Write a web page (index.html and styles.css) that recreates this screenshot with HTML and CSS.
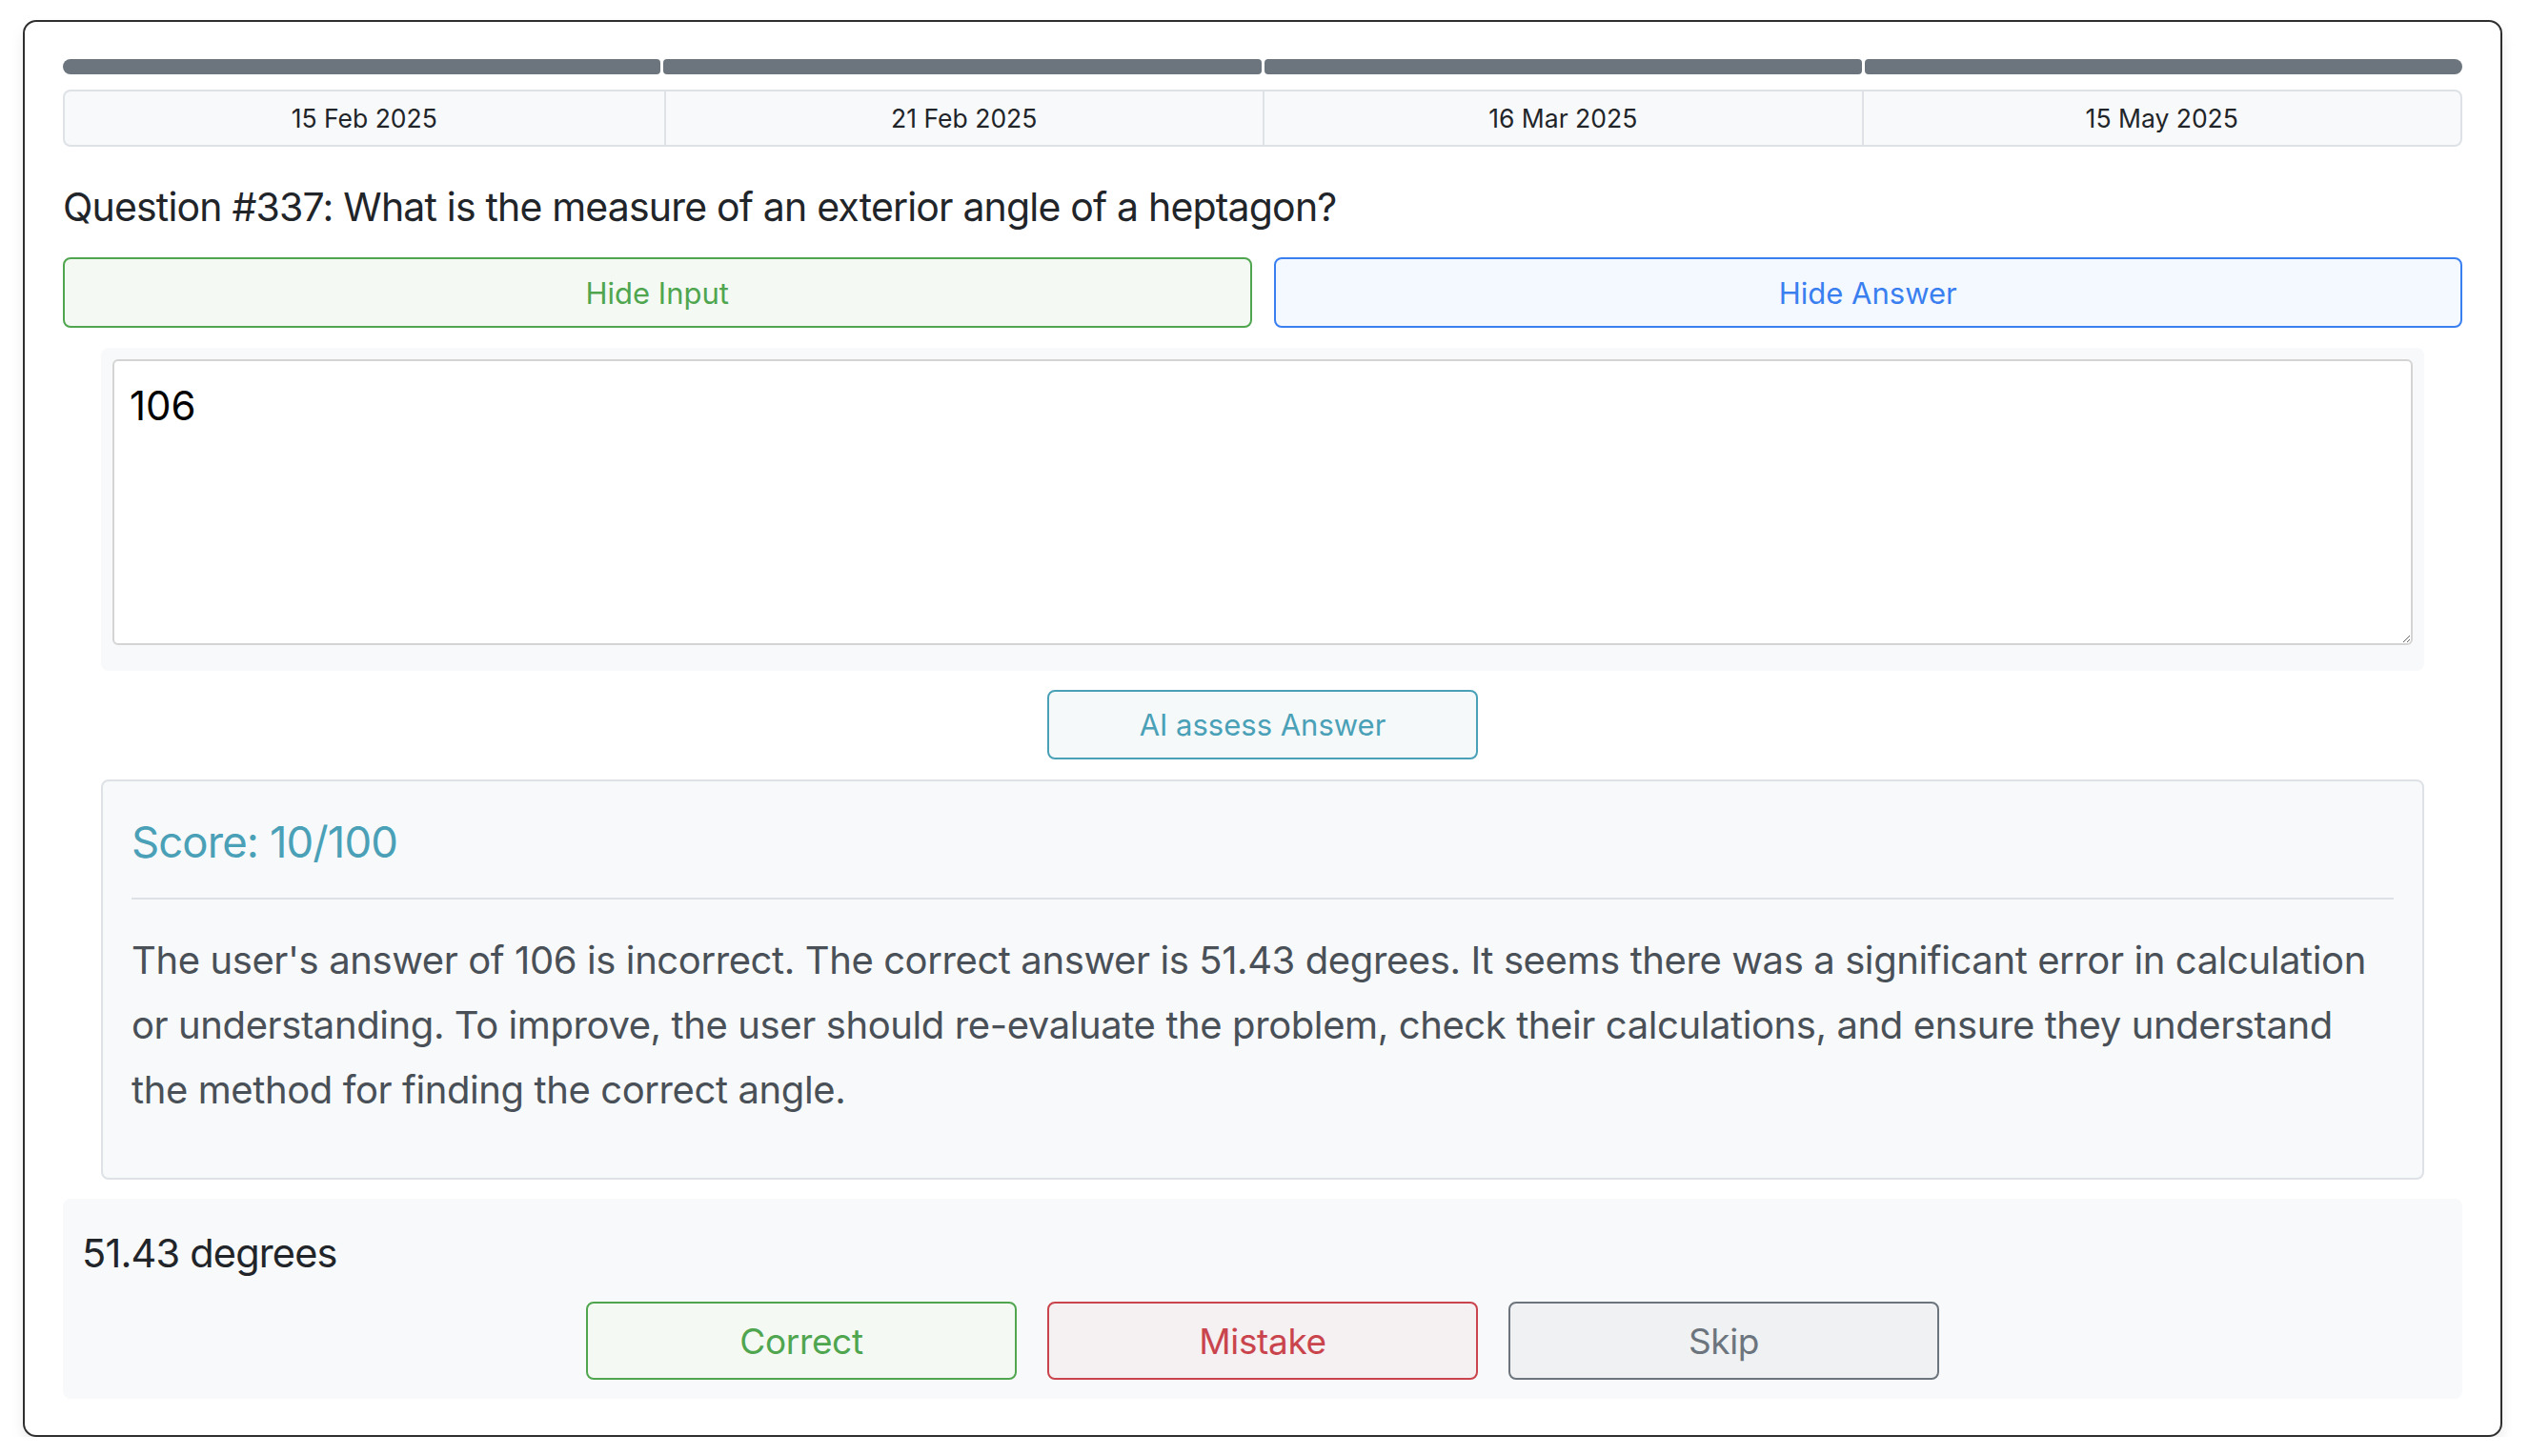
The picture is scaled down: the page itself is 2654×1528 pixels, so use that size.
FILE: index.html
```html
<!DOCTYPE html>
<html lang="en">
  <head>
    <meta charset="UTF-8" />
    <meta name="viewport" content="width=device-width, initial-scale=1.0" />
    <title>Review Question</title>
    <link rel="stylesheet" href="styles.css">
  </head>
  <body>
    <div class="review-card">
      <div class="timeline">
        <div class="segment"></div>
        <div class="segment"></div>
        <div class="segment"></div>
        <div class="segment"></div>
      </div>
      <div class="dates">
        <div class="date">15 Feb 2025</div>
        <div class="date">21 Feb 2025</div>
        <div class="date">16 Mar 2025</div>
        <div class="date">15 May 2025</div>
      </div>

      <h5 class="question">Question #337: What is the measure of an exterior angle of a heptagon?</h5>

      <div class="toggles">
        <button class="btn btn-green">Hide Input</button>
        <button class="btn btn-blue">Hide Answer</button>
      </div>

      <div class="input-panel">
        <textarea class="answer-input">106</textarea>
      </div>

      <div class="assess-row">
        <button class="btn btn-teal assess-btn">AI assess Answer</button>
      </div>

      <div class="score-card">
        <h4 class="score">Score: 10/100</h4>
        <hr>
        <p class="feedback">The user's answer of 106 is incorrect. The correct answer is 51.43 degrees. It seems there was a significant error in calculation or understanding. To improve, the user should re-evaluate the problem, check their calculations, and ensure they understand the method for finding the correct angle.</p>
      </div>

      <div class="answer-panel">
        <div class="answer">51.43 degrees</div>
        <div class="grade-buttons">
          <button class="btn btn-green grade">Correct</button>
          <button class="btn btn-red grade">Mistake</button>
          <button class="btn btn-gray grade">Skip</button>
        </div>
      </div>
    </div>
  </body>
</html>
```

FILE: styles.css
```css
* {
  box-sizing: border-box;
}
body {
  margin: 0;
  background: #fff;
  font-family: Inter, "Liberation Sans", Arial, sans-serif;
  color: #212529;
}
.review-card {
  margin: 21px 0 0 24px;
  width: 2602px;
  border: 2px solid #2f2f2f;
  border-radius: 14px;
  padding: 39px 40px 38px;
  box-shadow: 0 8px 14px rgba(0, 0, 0, 0.08);
}
.timeline {
  display: flex;
  gap: 3px;
  height: 16px;
}
.segment {
  flex: 1;
  background: #6c757d;
  border-radius: 4px;
}
.segment:first-child {
  border-radius: 8px 4px 4px 8px;
}
.segment:last-child {
  border-radius: 4px 8px 8px 4px;
}
.dates {
  display: grid;
  grid-template-columns: repeat(4, 1fr);
  margin-top: 16px;
  height: 60px;
  background: #f8f9fa;
  border: 2px solid #dee2e6;
  border-radius: 8px;
}
.date {
  display: flex;
  align-items: center;
  justify-content: center;
  font-size: 26.5px;
  border-left: 2px solid #dee2e6;
}
.date:first-child {
  border-left: none;
}
.question {
  margin: 39px 0 0;
  font-size: 41px;
  font-weight: 400;
  letter-spacing: -0.02em;
  line-height: 48px;
}
.toggles {
  display: grid;
  grid-template-columns: 1fr 1fr;
  gap: 23px;
  margin-top: 29px;
}
.btn {
  font-family: inherit;
  font-size: 31px;
  height: 74px;
  border: 2px solid;
  border-radius: 8px;
  cursor: pointer;
}
.btn-green {
  color: #4fa64f;
  border-color: #4fa64f;
  background: #f4f9f4;
}
.btn-blue {
  color: #3a7ff0;
  border-color: #3a7ff0;
  background: #f4f8ff;
}
.btn-teal {
  color: #4aa1b7;
  border-color: #4aa1b7;
  background: #f5f9fa;
}
.btn-red {
  color: #c9444c;
  border-color: #c9444c;
  background: #f5f0f1;
}
.btn-gray {
  color: #6c757d;
  border-color: #6c757d;
  background: #f0f1f3;
}
.input-panel {
  margin: 21px 40px 0;
  padding: 12px 12px 27px;
  background: #f8f9fa;
  border-radius: 8px;
}
.answer-input {
  display: block;
  width: 100%;
  height: 300px;
  padding: 22px 16px;
  font-family: inherit;
  font-size: 42px;
  line-height: 50px;
  color: #000;
  background: #fff;
  border: 2px solid #d4d4d4;
  border-radius: 6px;
  resize: vertical;
}
.assess-row {
  display: flex;
  justify-content: center;
  margin-top: 20px;
}
.assess-btn {
  width: 452px;
  height: 73px;
}
.score-card {
  margin: 21px 40px 0;
  padding: 36px 30px 58px;
  background: #f8f9fa;
  border: 2px solid #dee2e6;
  border-radius: 8px;
}
.score {
  margin: 0;
  font-size: 45.5px;
  font-weight: 400;
  letter-spacing: -0.02em;
  line-height: 55px;
  color: #4aa1b7;
}
.score-card hr {
  margin: 31px 0 0;
  border: none;
  border-top: 2px solid #dee2e6;
}
.feedback {
  margin: 30px 0 0;
  font-size: 40px;
  letter-spacing: -0.01em;
  line-height: 68px;
  color: #495057;
}
.answer-panel {
  margin-top: 20px;
  padding: 32px 20px 20px;
  background: #f8f9fa;
  border-radius: 8px;
}
.answer {
  font-size: 41.5px;
  letter-spacing: -0.02em;
  line-height: 50px;
}
.grade-buttons {
  display: flex;
  justify-content: center;
  gap: 32px;
  margin-top: 26px;
}
.grade {
  width: 452px;
  height: 82px;
  font-size: 37px;
  letter-spacing: -0.01em;
}
```
